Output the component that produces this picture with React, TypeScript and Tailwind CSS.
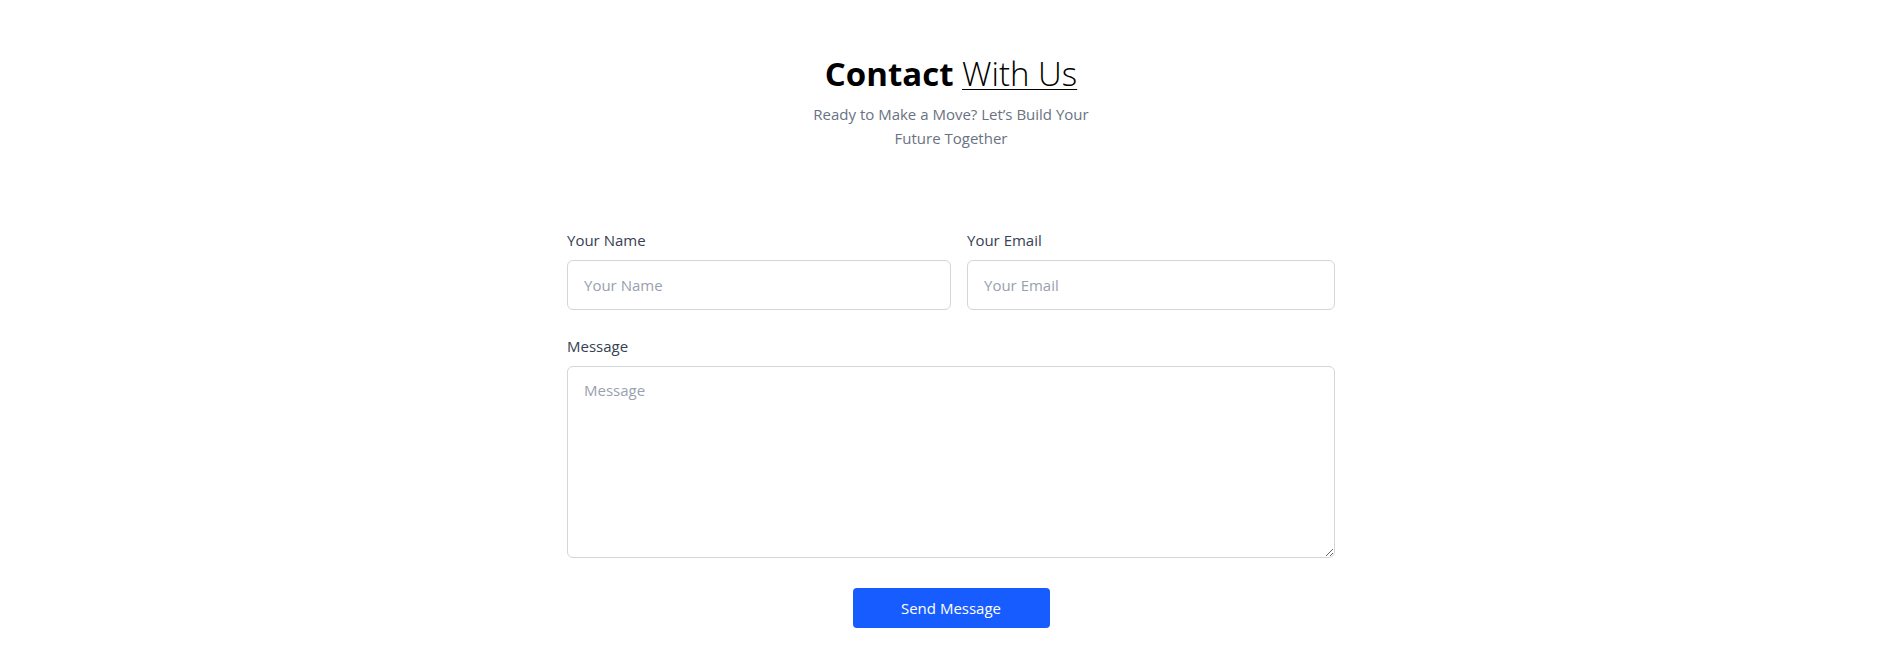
import React, { useState } from 'react';

export default function App() {
  const [name, setName] = useState('');
  const [email, setEmail] = useState('');
  const [message, setMessage] = useState('');

  return (
    <div
      className="min-h-screen bg-white pl-[5px] text-gray-700"
      style={{ fontFamily: '"Open Sans", "Noto Sans", sans-serif' }}
    >
      <section className="pt-[54px] pb-8">
        {/* Heading */}
        <h2 className="text-center text-[33px] leading-[40px] text-black">
          <span className="font-bold">Contact</span>{' '}
          <span className="font-light underline decoration-1 underline-offset-[3px]">With Us</span>
        </h2>
        <p className="mx-auto mt-2 max-w-xs text-center text-[15px] leading-6 text-gray-500">
          Ready to Make a Move? Let’s Build Your Future Together
        </p>

        {/* Form */}
        <form className="mx-auto mt-[78px] w-[768px]" onSubmit={(e) => e.preventDefault()}>
          <div className="grid grid-cols-[384px_1fr] gap-4">
            <div>
              <label className="mb-2 block text-[15px] leading-6 text-gray-700">Your Name</label>
              <input
                type="text"
                value={name}
                onChange={(e) => setName(e.target.value)}
                placeholder="Your Name"
                className="h-[50px] w-full rounded-md border border-gray-300 px-4 text-[15px] text-gray-700 placeholder-gray-400 focus:outline-none"
              />
            </div>
            <div>
              <label className="mb-2 block text-[15px] leading-6 text-gray-700">Your Email</label>
              <input
                type="email"
                value={email}
                onChange={(e) => setEmail(e.target.value)}
                placeholder="Your Email"
                className="h-[50px] w-full rounded-md border border-gray-300 px-4 text-[15px] text-gray-700 placeholder-gray-400 focus:outline-none"
              />
            </div>
          </div>

          <div className="mt-6">
            <label className="mb-2 block text-[15px] leading-6 text-gray-700">Message</label>
            <textarea
              value={message}
              onChange={(e) => setMessage(e.target.value)}
              placeholder="Message"
              className="block h-[192px] w-full rounded-md border border-gray-300 px-4 py-3 text-[15px] text-gray-700 placeholder-gray-400 focus:outline-none"
            />
          </div>

          <button
            type="submit"
            className="mx-auto mt-[30px] block h-10 w-[197px] rounded bg-[#175cff] text-[15px] text-white hover:bg-[#0f4fe6]"
          >
            Send Message
          </button>
        </form>
      </section>
    </div>
  );
}
